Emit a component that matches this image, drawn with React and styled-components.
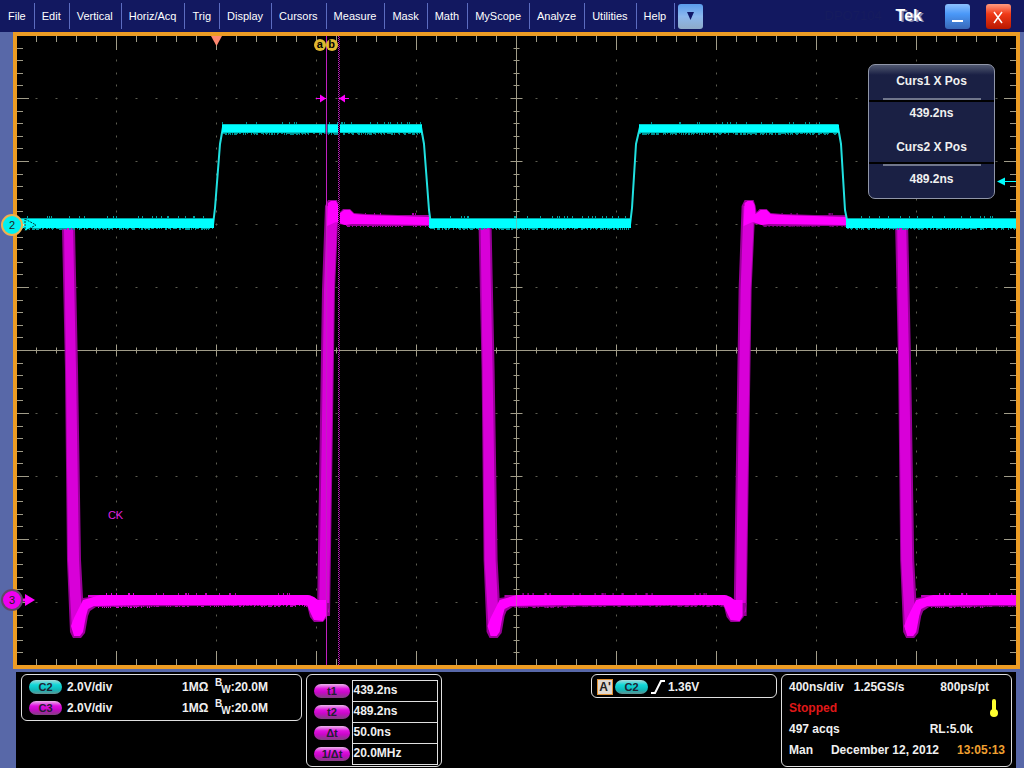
import React from "react";
import styled, { createGlobalStyle } from "styled-components";

const GlobalStyle = createGlobalStyle`
  * {
    box-sizing: border-box;
  }
  body {
    margin: 0;
    background: #5868a8;
    font-family: "Liberation Sans", Arial, sans-serif;
  }
`;

const Page = styled.div`
  display: flex;
  flex-direction: column;
  min-height: 100vh;
`;

/* ---------- top menu ---------- */
const TopBar = styled.header`
  display: flex;
  align-items: center;
  justify-content: space-between;
  height: 32px;
  background: #121860;
`;
const MenuBar = styled.nav`
  display: flex;
  align-items: center;
  padding-left: 1px;
`;
const MenuButton = styled.button`
  height: 26px;
  padding: 0 8px 0 7px;
  border: 0;
  border-right: 1px solid #5c6cc0;
  background: transparent;
  color: #ffffff;
  font-family: inherit;
  font-size: 11px;
  line-height: 26px;
  &:hover {
    background: #2a3590;
  }
`;
const WindowTools = styled.div`
  display: flex;
  align-items: center;
  padding-right: 13px;
`;
const IconButton = styled.button`
  display: flex;
  align-items: center;
  justify-content: center;
  width: 25px;
  height: 25px;
  margin-left: ${(p) => p.$gap}px;
  padding: 0;
  border: 0;
  border-radius: 3px;
  background: ${(p) =>
    p.$red
      ? "linear-gradient(#ff9a80, #f03a18 40%, #b81800)"
      : p.$pale
      ? "linear-gradient(#5a9cec, #8cb8ee 50%, #8eaac8)"
      : "linear-gradient(#8cc0ff, #4a98f8 40%, #3868b8)"};
`;
const Model = styled.span`
  color: #161c5e;
  font-size: 13px;
  line-height: 20px;
`;
const Brand = styled.span`
  margin-left: 14px;
  color: #ffffff;
  font-size: 16px;
  font-weight: bold;
  line-height: 32px;
  text-shadow: 2px 1px 0 #8088b0;
`;

/* ---------- graticule ---------- */
const ScreenArea = styled.main`
  display: flex;
  flex: 1;
  padding: 0 4px 3px 13px;
`;
const Screen = styled.div`
  position: relative;
  display: flex;
  flex: 1;
  min-height: 320px;
  border: 4px solid #ec9c24;
  background: #000000;
`;
const Plot = styled.svg`
  flex: 1;
  width: 100%;
  height: 100%;
  min-width: 0;
`;
const ChannelMark = styled.div`
  position: absolute;
  top: ${(p) => p.$top}%;
  left: -16px;
  display: flex;
  align-items: center;
  height: 22px;
  margin-top: -11px;
`;
const ChannelDot = styled.span`
  width: 22px;
  height: 22px;
  border: 2px solid ${(p) => p.$ring};
  border-radius: 50%;
  background: ${(p) => p.$color};
  color: #202020;
  font-size: 11px;
  line-height: 18px;
  text-align: center;
`;
const CursorTag = styled.span`
  position: absolute;
  top: 3px;
  left: ${(p) => p.$left}%;
  width: 12px;
  height: 12px;
  margin-left: -6px;
  border-radius: 50%;
  background: #e0b830;
  color: #000000;
  font-size: 11px;
  font-weight: bold;
  line-height: 11px;
  text-align: center;
`;
const WaveLabel = styled.span`
  position: absolute;
  top: 75%;
  left: 9.1%;
  color: #e020e0;
  font-size: 11px;
  line-height: 14px;
`;
const CursorPanel = styled.section`
  position: absolute;
  top: 28px;
  right: 21px;
  width: 127px;
  height: 135px;
  padding-top: 1px;
  border: 1px solid #9096a8;
  border-radius: 7px;
  background: linear-gradient(#505870, #1a2044 10px);
  color: #f0f0f0;
  font-size: 12px;
  font-weight: bold;
  text-align: center;
`;
const CursorName = styled.h2`
  margin: 0;
  font-size: 12px;
  line-height: 30px;
`;
const CursorValue = styled.p`
  margin: 0 0 8px;
  line-height: 22px;
`;
const Divider = styled.div`
  height: 6px;
  border-bottom: 2px solid #000000;
  background: linear-gradient(#70768c, #70768c) center 2px / 98px 2px no-repeat;
`;
const DividerLow = styled(Divider)`
  border-top: 2px solid #000000;
  border-bottom: 0;
  background-position: center 0;
`;

/* ---------- readouts ---------- */
const Readouts = styled.footer`
  display: flex;
  align-items: flex-start;
  height: 96px;
  margin: 0 8px 0 16px;
  padding: 2px 4px 0 5px;
  background: #000000;
  color: #f0f0f0;
  font-size: 12px;
  font-weight: bold;
`;
const Box = styled.section`
  border: 1px solid #e0e0e0;
  border-radius: 6px;
`;
const ChannelBox = styled(Box)`
  width: 281px;
  height: 47px;
  padding: 1px 7px;
`;
const ChannelRow = styled.div`
  display: grid;
  grid-template-columns: 38px 115px 33px 1fr;
  align-items: center;
  height: 21px;
`;
const Pill = styled.span`
  display: block;
  width: ${(p) => (p.$wide ? 36 : 33)}px;
  height: 14px;
  border-radius: 7px;
  background: ${(p) =>
    p.$cyan
      ? "linear-gradient(#a8d8d8, #10d8d8 35%, #10b8b8 70%, #609090)"
      : "linear-gradient(#e8b8e8, #e010e0 35%, #c808c8 60%, #804080)"};
  color: #202030;
  font-size: 11px;
  font-weight: bold;
  line-height: 15px;
  text-align: center;
`;
const Bandwidth = styled.span`
  display: flex;
  height: 20px;
  line-height: 20px;
`;
const Sup = styled.span`
  font-size: 10px;
  line-height: 12px;
`;
const Sub = styled.span`
  margin: 7px 0 0 -1px;
  font-size: 10px;
  line-height: 12px;
`;
const MeasureBox = styled(Box)`
  width: 136px;
  height: 93px;
  margin-left: 4px;
  padding: 5px 3px 1px 7px;
`;
const MeasureTable = styled.table`
  width: 100%;
  border-collapse: collapse;
  th {
    width: 38px;
    padding: 0;
  }
  td {
    height: 21px;
    padding: 0 1px 2px;
    border: 1px solid #e0e0e0;
    line-height: 14px;
  }
`;
const TriggerBox = styled(Box)`
  display: flex;
  align-items: center;
  width: 186px;
  height: 24px;
  margin-left: auto;
  padding: 2px 5px 0;
`;
const Mode = styled.span`
  width: 16px;
  height: 16px;
  margin-right: 2px;
  border: 1px solid #e09030;
  background: #e0d8d0;
  color: #202020;
  line-height: 14px;
  text-align: center;
`;
const Slope = styled.svg`
  width: 14px;
  height: 14px;
  margin: 0 3px;
`;
const AcqBox = styled(Box)`
  width: 231px;
  height: 93px;
  margin-left: 4px;
  padding: 1px 6px 0 7px;
`;
const AcqRow = styled.div`
  display: flex;
  align-items: center;
  justify-content: space-between;
  height: 21px;
  padding-right: ${(p) => p.$end || 0}px;
  color: ${(p) => p.$color || "inherit"};
`;
const AcqPair = styled.span`
  display: flex;
  gap: 10px;
`;
const Clock = styled.time`
  color: #f0a030;
`;

const MENUS = [
  "File", "Edit", "Vertical", "Horiz/Acq", "Trig", "Display", "Cursors",
  "Measure", "Mask", "Math", "MyScope", "Analyze", "Utilities", "Help",
];
const MEASURES = [
  ["t1", "439.2ns"],
  ["t2", "489.2ns"],
  ["Δt", "50.0ns"],
  ["1/Δt", "20.0MHz"],
];
const CENTER_X = 516.5;
const CENTER_Y = 350.5;
const PERIOD = 416.6;

function range(count) {
  return Array.from({ length: count }, (_, i) => i);
}

// thin vertical spikes round a flat level
function spikes(x1, x2, level, up, down, seed) {
  let n = seed;
  let d = "";
  for (let x = x1; x < x2; x += 1) {
    n = (n * 16807) % 2147483647;
    const a = (n >> 8) % 9;
    const b = (n >> 12) % 3;
    d += `M${x + 0.5} ${level - up - (a === 0 ? 2 : 0)}V${level + down + b}`;
  }
  return d;
}

function Graticule() {
  const xs = range(51).map((i) => 16.5 + i * 20);
  const ys = range(51).map((i) => Math.round(35 + i * 12.6) + 0.5);
  const ticks =
    xs.map((x, i) => {
      const edge = i % 5 ? 6 : 14;
      const mid = i % 5 ? 3 : 6;
      return `M${x} 36v${edge}M${x} 665v${-edge}M${x} ${CENTER_Y - mid}v${mid * 2}`;
    }).join("") +
    ys.map((y, i) => {
      const edge = i % 5 ? 6 : 12;
      const mid = i % 5 ? 3 : 6;
      return `M17 ${y}h${edge}M1016 ${y}h${-edge}M${CENTER_X - mid} ${y}h${mid * 2}`;
    }).join("");
  let dots = "";
  xs.forEach((x, i) => {
    ys.forEach((y, j) => {
      if (i % 5 === 0) dots += `M${x} ${y - 1}v2`;
      if (j % 5 === 0) dots += `M${x - 1} ${y}h2`;
    });
  });
  return (
    <g fill="none">
      <path d={dots} stroke="#5c5c50" />
      <path d={ticks} stroke="#a09c88" />
      <path d="M17 350.5H1016M516.5 36V665" stroke="#a09c88" />
    </g>
  );
}

// edge down, undershoot and the low level up to the next rise
function DataPulse({ shift }) {
  return (
    <g transform={`translate(${shift} 0)`}>
      <path d={spikes(88, 150, 600, 5, 6, 77)} stroke="#e000e0" />
      <path d={spikes(150, 308, 600, 5, 5, 99)} stroke="#b800b8" />
      <path d="M62 228H75L78 370L81 560L83 598L90 597L310 595L315 598L318 603L330 603L327 617L323 622H314L310 617L307 605L96 607L90 611L88 616L85 633L81 638H73L70 632L67 560L65 370Z" fill="#980098" />
      <path d="M64 228H73L76 370L79 560L81 600L83 628L72 630L68 560L66 370Z" fill="#d800d8" />
      <path d="M74 618L71 626L74 636H80L83 632L86 616L88 609L94 606L150 605L307 605L311 614L314 620L323 621L326 616V600H318L314 597L308 595H100L90 598L83 600Z" fill="#ff00ff" />
    </g>
  );
}

// edge up, overshoot and the high level
function DataRise({ shift }) {
  return (
    <g transform={`translate(${shift} 0)`}>
      <path d={spikes(345, 430, 220, 5, 5, 55)} stroke="#a800a8" />
      <path d="M317 616L322 290L325 206L328 200H337L339 206L340 212L343 209L350 209L354 213L366 214L430 216V226H352L338 224L335 290L330 616Z" fill="#980098" />
      <path d="M319 618L324 290L327 206H336L337 224L334 290L329 612Z" fill="#d800d8" />
      <path d="M327 226L328 203L331 201H336L338 205L339 214L344 210L350 210L354 214L366 215L430 217V225L352 224L345 225L336 222Z" fill="#ff00ff" />
    </g>
  );
}

function ClockTrace() {
  return (
    <g fill="none" strokeLinejoin="round">
      <path d={spikes(17, 213, 223, 5, 5, 11)} stroke="#00a0a0" />
      <path d={spikes(430, 630, 223, 5, 5, 23)} stroke="#00a0a0" />
      <path d={spikes(847, 1016, 223, 5, 5, 37)} stroke="#00a0a0" />
      <path d={spikes(222, 422, 128, 4, 5, 41)} stroke="#009090" />
      <path d={spikes(639, 838, 128, 4, 5, 53)} stroke="#009090" />
      <path
        d="M213 225L215 208L220 144L223 127M421 127L424 144L429 210L431 225M630 225L632 208L636 144L640 127M838 127L841 144L845 210L848 225"
        stroke="#20e0e0"
        strokeWidth="2"
      />
      <path
        d="M17 223.5H214M429 223.5H631M846 223.5H1016"
        stroke="#00ffff"
        strokeWidth="9"
      />
      <path d="M222 128.5H422M639 128.5H839" stroke="#00ffff" strokeWidth="8" />
    </g>
  );
}

function Waveforms() {
  return (
    <Plot viewBox="17 36 999 629" preserveAspectRatio="none" role="img" aria-label="Waveforms">
      <Graticule />
      <DataRise shift={0} />
      <DataRise shift={PERIOD} />
      <DataPulse shift={0} />
      <DataPulse shift={PERIOD} />
      <DataPulse shift={PERIOD * 2} />
      <ClockTrace />
      <path d="M516.5 190V240M516.5 590V612" stroke="#a09c88" opacity="0.5" />
      <path d="M326.5 124V134M339 124V134M339 200V226" stroke="#000000" strokeWidth="2" />
      <path d="M326.5 36V665" stroke="#c020c0" />
      <path d="M338.5 36V665" stroke="#c020c0" strokeDasharray="1 1" />
      <path d="M339.5 37V665" stroke="#a010a0" strokeDasharray="1 1" />
      <path d="M316 98.5H326M339 98.5H349" stroke="#ff00ff" />
      <path d="M320 94.5L326 98.5L320 102.5ZM345 94.5L339 98.5L345 102.5Z" fill="#ff00ff" />
      <path d="M211 36H222L216.5 46Z" fill="#ff8870" />
      <path d="M997 181.5L1005 177.5V185.5Z" fill="#00ffff" />
      <path d="M1004 181.5H1016" stroke="#00ffff" />
    </Plot>
  );
}

function Channel({ name, cyan }) {
  return (
    <ChannelRow>
      <Pill $cyan={cyan}>{name}</Pill>
      <span>2.0V/div</span>
      <span>1MΩ</span>
      <Bandwidth>
        <Sup>B</Sup>
        <Sub>W</Sub>:20.0M
      </Bandwidth>
    </ChannelRow>
  );
}

function App() {
  return (
    <Page>
      <GlobalStyle />
      <TopBar>
        <MenuBar>
          {MENUS.map((name) => (
            <MenuButton key={name}>{name}</MenuButton>
          ))}
          <IconButton $pale $gap={3} aria-label="More">
            <svg width="7" height="8" viewBox="0 0 7 8">
              <path d="M0 0H7L3.5 8Z" fill="#101868" />
            </svg>
          </IconButton>
        </MenuBar>
        <WindowTools>
          <Model>DPO7104</Model>
          <Brand>Tek</Brand>
          <IconButton $gap={23} aria-label="Minimize">
            <svg width="25" height="25" viewBox="0 0 25 25">
              <path d="M7 17H18" stroke="#ffffff" strokeWidth="2" />
            </svg>
          </IconButton>
          <IconButton $red $gap={16} aria-label="Close">
            <svg width="25" height="25" viewBox="0 0 25 25">
              <path d="M8 8L16 19M16 8L8 19" stroke="#ffffff" strokeWidth="1.5" />
            </svg>
          </IconButton>
        </WindowTools>
      </TopBar>
      <ScreenArea>
        <Screen>
          <Waveforms />
          <ChannelMark $top={30}>
            <ChannelDot $color="#00f0f0" $ring="#f0b050">2</ChannelDot>
            <svg width="14" height="12" viewBox="0 0 14 12">
              <path d="M0 6H4" stroke="#c0f0d0" strokeWidth="2" />
              <path d="M2 0L13 6L2 12Z" fill="#00ffff" stroke="#003838" strokeDasharray="2 1" />
            </svg>
          </ChannelMark>
          <ChannelMark $top={89.7}>
            <ChannelDot $color="#f000f0" $ring="#604868">3</ChannelDot>
            <svg width="12" height="12" viewBox="0 0 12 12">
              <path d="M0 6H4" stroke="#ff00ff" strokeWidth="3" />
              <path d="M2 0L12 6L2 12Z" fill="#ff00ff" />
            </svg>
          </ChannelMark>
          <CursorTag $left={30.3}>a</CursorTag>
          <CursorTag $left={31.5}>b</CursorTag>
          <WaveLabel>CK</WaveLabel>
          <CursorPanel>
            <CursorName>Curs1 X Pos</CursorName>
            <Divider />
            <CursorValue>439.2ns</CursorValue>
            <CursorName>Curs2 X Pos</CursorName>
            <DividerLow />
            <CursorValue>489.2ns</CursorValue>
          </CursorPanel>
        </Screen>
      </ScreenArea>
      <Readouts>
        <ChannelBox>
          <Channel name="C2" cyan />
          <Channel name="C3" />
        </ChannelBox>
        <MeasureBox>
          <MeasureTable>
            <tbody>
              {MEASURES.map(([name, value]) => (
                <tr key={name}>
                  <th scope="row">
                    <Pill $wide>{name}</Pill>
                  </th>
                  <td>{value}</td>
                </tr>
              ))}
            </tbody>
          </MeasureTable>
        </MeasureBox>
        <TriggerBox>
          <Mode>A'</Mode>
          <Pill $cyan>C2</Pill>
          <Slope viewBox="0 0 14 14">
            <path d="M0 13H4L10 1H14" fill="none" stroke="#ffffff" strokeWidth="2" />
          </Slope>
          <span>1.36V</span>
        </TriggerBox>
        <AcqBox>
          <AcqRow $end={16}>
            <AcqPair>
              <span>400ns/div</span>
              <span>1.25GS/s</span>
            </AcqPair>
            <span>800ps/pt</span>
          </AcqRow>
          <AcqRow $color="#e01818" $end={6}>
            <span>Stopped</span>
            <svg width="10" height="18" viewBox="0 0 10 18">
              <path d="M5 2V13" stroke="#ffff30" strokeWidth="4" strokeLinecap="round" />
              <circle cx="5" cy="14" r="4" fill="#ffff30" />
            </svg>
          </AcqRow>
          <AcqRow $end={32}>
            <span>497 acqs</span>
            <span>RL:5.0k</span>
          </AcqRow>
          <AcqRow>
            <span>Man</span>
            <span>December 12, 2012</span>
            <Clock>13:05:13</Clock>
          </AcqRow>
        </AcqBox>
      </Readouts>
    </Page>
  );
}

export default App;
